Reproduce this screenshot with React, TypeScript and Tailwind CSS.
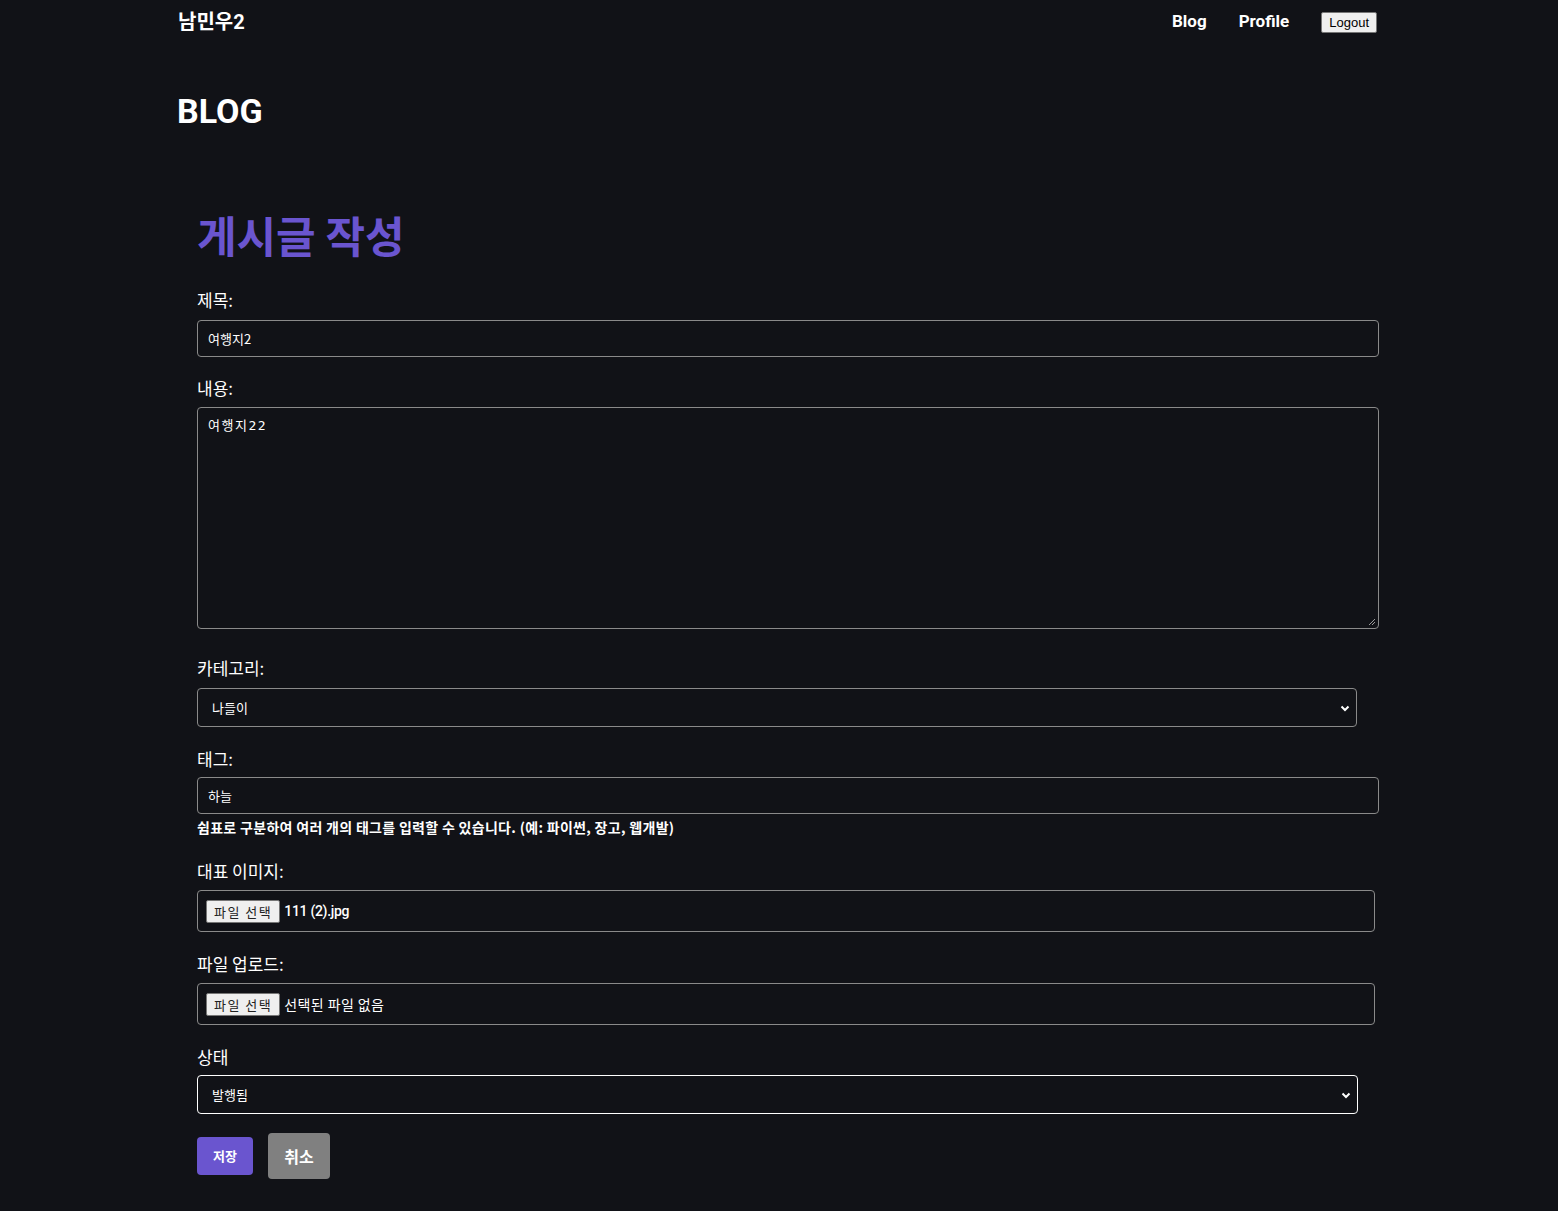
import React from "react";

const kr = { fontFamily: '"Noto Sans CJK KR", "Noto Sans", sans-serif' };
const rb = { fontFamily: 'Roboto, "Noto Sans CJK KR", sans-serif' };

function Chevron() {
  return (
    <svg width="12" height="12" viewBox="0 0 12 12" className="absolute right-[5px] top-1/2 -translate-y-1/2">
      <path d="M2.5 4.5 L6 8 L9.5 4.5" fill="none" stroke="#ffffff" strokeWidth="2" />
    </svg>
  );
}

function FileField({ value }: { value: string }) {
  const isName = value.startsWith("111");
  return (
    <div className="flex items-center h-[42px] w-[1178px] border border-[#8a8a8a] rounded-[4px] px-[8px] text-white" style={kr}>
      <span className="bg-[#efefef] text-[#222] border border-[#767676] rounded-[2px] px-[7px] h-[23px] leading-[21px] text-[13px] tracking-[1.5px]">파일 선택</span>
      <span
        className={isName ? "ml-[4px] text-[14px] font-medium tracking-[-0.3px]" : "ml-[4px] text-[14px] tracking-[0.4px]"}
        style={isName ? rb : kr}
      >
        {value}
      </span>
    </div>
  );
}

export default function App() {
  return (
    <div className="min-h-screen bg-[#111217] text-white" style={kr}>
      <div className="w-[1204px] mx-auto">
        {/* Header */}
        <div className="flex items-center justify-between h-[44px]">
          <div className="text-[20px] font-bold pl-[1px]" style={rb}>남민우2</div>
          <div className="flex items-center gap-[32px] text-[17px] font-bold mr-[4px]" style={rb}>
            <span>Blog</span>
            <span>Profile</span>
            <button className="bg-[#efefef] text-black text-[13px] font-normal border border-[#767676] rounded-[2px] px-[7px] h-[21px] leading-[19px]" style={{ fontFamily: '"Liberation Sans", Arial, sans-serif' }}>
              Logout
            </button>
          </div>
        </div>

        <h1 className="text-[34px] font-bold mt-[47px] leading-[40px]" style={rb}>BLOG</h1>

        {/* Form */}
        <div className="px-[20px] mt-[77px]">
          <h2 className="text-[43px] font-bold text-[#6a55cf] leading-[52px]">게시글 작성</h2>

          <div className="mt-[28px]">
            <label className="block text-[17px] leading-[24px]">제목:</label>
            <div className="mt-[8px] h-[37px] w-[1182px] border border-[#8a8a8a] rounded-[4px] px-[10px] flex items-center text-[13px]">여행지2</div>
          </div>

          <div className="mt-[19px]">
            <label className="block text-[17px] leading-[24px]">내용:</label>
            <div className="mt-[7px] relative h-[222px] w-[1182px] border border-[#8a8a8a] rounded-[4px] px-[10px] py-[8px] text-[13px] tracking-[1.5px]" style={{ fontFamily: '"DejaVu Sans Mono", "Noto Sans CJK KR", monospace' }}>
              여행지22
              <svg width="8" height="8" viewBox="0 0 8 8" className="absolute right-[2px] bottom-[2px]">
                <path d="M1 7 L7 1 M4 7 L7 4" stroke="#9a9a9a" strokeWidth="1" />
              </svg>
            </div>
          </div>

          <div className="mt-[27px]">
            <label className="block text-[17px] leading-[24px]">카테고리:</label>
            <div className="mt-[8px] relative h-[39px] w-[1160px] border border-[#8a8a8a] rounded-[4px] pl-[14px] flex items-center text-[13px]">
              나들이
              <Chevron />
            </div>
          </div>

          <div className="mt-[20px]">
            <label className="block text-[17px] leading-[24px]">태그:</label>
            <div className="mt-[6px] h-[37px] w-[1182px] border border-[#8a8a8a] rounded-[4px] px-[10px] flex items-center text-[13px]">하늘</div>
            <p className="text-[14px] font-bold mt-[4px] leading-[18px] tracking-[0.3px]">쉼표로 구분하여 여러 개의 태그를 입력할 수 있습니다. (예: 파이썬, 장고, 웹개발)</p>
          </div>

          <div className="mt-[23px]">
            <label className="block text-[17px] leading-[24px]">대표 이미지:</label>
            <div className="mt-[7px]">
              <FileField value="111 (2).jpg" />
            </div>
          </div>

          <div className="mt-[20px]">
            <label className="block text-[17px] leading-[24px]">파일 업로드:</label>
            <div className="mt-[7px]">
              <FileField value="선택된 파일 없음" />
            </div>
          </div>

          <div className="mt-[20px]">
            <label className="block text-[17px] leading-[24px]">상태</label>
            <div className="mt-[6px] relative h-[39px] w-[1161px] border-[1.5px] border-white rounded-[4px] pl-[14px] flex items-center text-[13px]">
              발행됨
              <Chevron />
            </div>
          </div>

          <div className="flex items-center gap-[15px] mt-[19px]">
            <button className="bg-[#6a55cf] text-white text-[13px] font-bold rounded-[4px] w-[56px] h-[38px]">저장</button>
            <button className="bg-[#808080] text-white text-[16px] font-bold rounded-[4px] w-[62px] h-[46px]">취소</button>
          </div>
          <div className="h-[31px]" />
        </div>
      </div>
    </div>
  );
}
